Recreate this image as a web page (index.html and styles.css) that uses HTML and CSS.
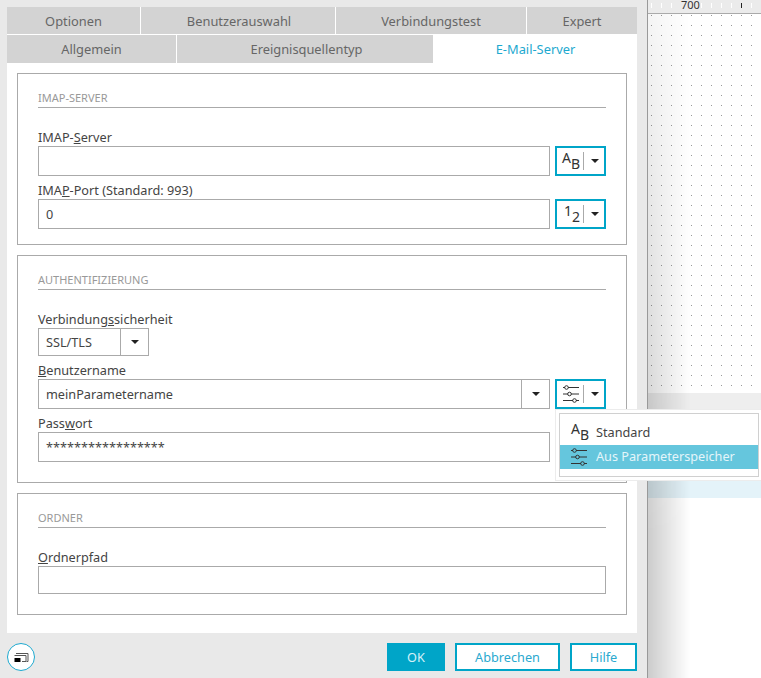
FILE: index.html
```html
<!DOCTYPE html>
<html lang="de">
<head>
  <meta charset="UTF-8" />
  <meta name="viewport" content="width=device-width, initial-scale=1.0"/>
  <title>E-Mail-Server</title>
  <link rel="stylesheet" href="styles.css">
</head>
<body>

  <div class="dialog">
    <div class="panel">
      <div class="tabs tabs-top">
        <div class="tab t-optionen">Optionen</div>
        <div class="tab t-benutzer">Benutzerauswahl</div>
        <div class="tab t-test">Verbindungstest</div>
        <div class="tab t-expert">Expert</div>
      </div>
      <div class="tabs tabs-bottom">
        <div class="tab t-allgemein">Allgemein</div>
        <div class="tab t-quelle">Ereignisquellentyp</div>
        <div class="tab tab-active">E-Mail-Server</div>
      </div>

      <div class="content">
        <section class="group group-first">
          <h2 class="group-title">IMAP-SERVER</h2>
          <label class="label">IMAP-<u>S</u>erver</label>
          <div class="row">
            <div class="input"></div>
            <div class="mode"><span class="mode-icon"><span class="hi">A</span><span class="lo">B</span></span><i class="sep"></i><i class="caret"></i></div>
          </div>
          <label class="label">IMA<u>P</u>-Port (Standard: 993)</label>
          <div class="row">
            <div class="input">0</div>
            <div class="mode"><span class="mode-icon mode-icon-num"><span class="hi">1</span><span class="lo">2</span></span><i class="sep"></i><i class="caret"></i></div>
          </div>
        </section>

        <section class="group">
          <h2 class="group-title">AUTHENTIFIZIERUNG</h2>
          <label class="label">Verbindung<u>s</u>sicherheit</label>
          <div class="select">
            <span class="select-value">SSL/TLS</span>
            <span class="select-arrow"><i class="caret"></i></span>
          </div>
          <label class="label"><u>B</u>enutzername</label>
          <div class="row">
            <div class="input input-combo">
              <span class="select-value">meinParametername</span>
              <span class="select-arrow"><i class="caret"></i></span>
            </div>
            <div class="mode">
              <svg class="sliders" width="20" height="20" viewBox="0 0 20 20"><path d="M1 3.500h2M6 3.500h11M1 10h5M9 10h8M1 16.500h10M14 16.500h3" /><circle cx="4.500" cy="3.500" r="1.800" /><circle cx="7.500" cy="10" r="1.800" /><circle cx="12.500" cy="16.500" r="1.800" /></svg>
              <i class="sep"></i><i class="caret"></i>
            </div>
          </div>
          <label class="label">Pass<u>w</u>ort</label>
          <div class="row">
            <div class="input input-password">*****************</div>
            <div class="mode-spacer"></div>
          </div>
        </section>

        <section class="group">
          <h2 class="group-title">ORDNER</h2>
          <label class="label"><u>O</u>rdnerpfad</label>
          <div class="input input-low"></div>
        </section>
      </div>
    </div>

    <div class="footer">
      <div class="round-btn">
        <svg width="16" height="14" viewBox="0 0 16 14"><path class="line" d="M3 3.500H15V11.500H13.500M1.500 5.500H13V11.500H9" /><rect x="1.500" y="8" width="6" height="4" /></svg>
      </div>
      <div class="footer-right">
        <div class="btn btn-primary">OK</div>
        <div class="btn btn-cancel">Abbrechen</div>
        <div class="btn btn-help">Hilfe</div>
      </div>
    </div>
  </div>

  <div class="canvas">
    <div class="ruler"><span class="ruler-num">700</span></div>
    <div class="dots"></div>
    <div class="greybar"></div>
    <div class="band"></div>
    <div class="blank"></div>
  </div>

  <div class="menu">
    <div class="menu-inner">
      <div class="menu-item">
        <span class="mode-icon menu-icon"><span class="hi">A</span><span class="lo">B</span></span>
        Standard
      </div>
      <div class="menu-item menu-item-active">
        <svg class="sliders menu-svg" width="20" height="20" viewBox="0 0 20 20"><path d="M1 3.500h2M6 3.500h11M1 10h5M9 10h8M1 16.500h10M14 16.500h3" /><circle cx="4.500" cy="3.500" r="1.800" /><circle cx="7.500" cy="10" r="1.800" /><circle cx="12.500" cy="16.500" r="1.800" /></svg>
        Aus Parameterspeicher
      </div>
    </div>
  </div>

</body>
</html>
```

FILE: styles.css
```css
html, body {
  height: 100%;
}
body {
  margin: 0;
  display: flex;
  overflow: hidden;
  background-color: #ffffff;
  font-family: "Noto Sans", sans-serif;
  font-size: 12.700px;
  color: #444;
}
.dialog {
  width: 647px;
  flex: none;
  box-sizing: border-box;
  padding: 7px 10px 7px 7px;
  background-color: #e9e9e9;
  display: flex;
  flex-direction: column;
}
.panel {
  background-color: #fff;
}
.tabs {
  display: flex;
  gap: 1px;
  color: #666;
  font-size: 12.850px;
}
.tabs-top {
  height: 27px;
  margin-bottom: 1px;
}
.tabs-bottom {
  height: 28px;
}
.tab {
  display: flex;
  align-items: center;
  justify-content: center;
  background-color: #d3d3d3;
}
.t-optionen { width: 133px; }
.t-benutzer { width: 194px; box-sizing: border-box; padding-left: 2px; }
.t-test { width: 190px; }
.t-expert { flex: 1; }
.t-allgemein { width: 169px; }
.t-quelle { width: 256px; box-sizing: border-box; padding-left: 3px; }
.tab-active {
  flex: 1;
  margin-left: -1px;
  padding-left: 1px;
  background-color: #fff;
  color: #1da9cf;
}
.content {
  padding: 10px 10px 18px;
  display: flex;
  flex-direction: column;
  gap: 10px;
}
.group {
  border: 1px solid #aaa;
  padding: 0 20px 20px;
}
.group-first {
  padding-bottom: 15px;
}
.group-title {
  height: 34px;
  box-sizing: border-box;
  margin: 0 0 20px;
  padding-bottom: 2px;
  display: flex;
  align-items: flex-end;
  border-bottom: 1px solid #aaa;
  font-size: 11px;
  font-weight: normal;
  color: #999;
}
.label {
  display: block;
  height: 18px;
  line-height: 18px;
  margin-top: 5px;
}
.group-title + .label {
  margin-top: 0;
}
.row {
  display: flex;
  gap: 5px;
}
.input {
  flex: 1;
  height: 30px;
  box-sizing: border-box;
  border: 1px solid #aaa;
  padding-left: 7px;
  line-height: 28px;
  display: flex;
}
.input-low {
  height: 28px;
}
.input-combo {
  padding-left: 0;
}
.select {
  width: 111px;
  height: 28px;
  box-sizing: border-box;
  border: 1px solid #aaa;
  display: flex;
  line-height: 26px;
}
.select-value {
  flex: 1;
  padding-left: 7px;
}
.select-arrow {
  width: 27px;
  border-left: 1px solid #aaa;
  display: flex;
  align-items: center;
  justify-content: center;
}
.caret {
  width: 0;
  height: 0;
  border-left: 4px solid transparent;
  border-right: 4px solid transparent;
  border-top: 4px solid #222;
}
.mode {
  width: 51px;
  height: 30px;
  flex: none;
  box-sizing: border-box;
  border: 2px solid #00a5c8;
  display: flex;
  align-items: center;
  padding-left: 5px;
}
.mode-spacer {
  width: 51px;
  flex: none;
}
.mode-icon {
  width: 20px;
  height: 20px;
  flex: none;
  display: flex;
  color: #333;
  font-size: 14px;
  line-height: 20px;
}
.mode-icon-num {
  padding-left: 2px;
  box-sizing: border-box;
}
.hi {
  margin-top: -3px;
}
.lo {
  margin-top: 3px;
}
.sep {
  width: 1px;
  height: 18px;
  margin: 0 7px 0 1px;
  background-color: #aaa;
}
.sliders {
  flex: none;
}
.sliders path,
.sliders circle {
  fill: none;
  stroke: #333;
  stroke-width: 1;
}
.footer {
  margin-top: 10px;
  height: 28px;
  display: flex;
  justify-content: space-between;
}
.footer-right {
  display: flex;
  gap: 10px;
}
.round-btn {
  width: 28px;
  height: 28px;
  box-sizing: border-box;
  border: 1px solid #1da9cf;
  border-radius: 50%;
  background-color: #fff;
  display: flex;
  align-items: center;
  justify-content: center;
}
.round-btn .line {
  fill: none;
  stroke: #555;
  stroke-width: 1;
}
.btn {
  height: 28px;
  box-sizing: border-box;
  border: 2px solid #00a5c8;
  background-color: #fff;
  color: #2aa9cf;
  display: flex;
  align-items: center;
  justify-content: center;
}
.btn-primary {
  width: 58px;
  background-color: #00a5c8;
  color: #d5f1f8;
}
.btn-cancel {
  width: 105px;
}
.btn-help {
  width: 67px;
}
.canvas {
  flex: 1;
  display: flex;
  flex-direction: column;
  position: relative;
  border-left: 1px solid #999;
}
.canvas::after {
  content: "";
  position: absolute;
  left: 0;
  top: 14px;
  bottom: 0;
  width: 42px;
  background: linear-gradient(to right, rgba(0, 0, 0, 0.2), rgba(0, 0, 0, 0));
  -webkit-mask-image: linear-gradient(to bottom, rgba(0, 0, 0, 0.2), #000 520px);
  mask-image: linear-gradient(to bottom, rgba(0, 0, 0, 0.2), #000 520px);
}
.ruler {
  height: 14px;
  box-sizing: border-box;
  flex: none;
  border-bottom: 1px solid #aaa;
  background-color: #ebebeb;
  background-image:
    linear-gradient(#222, #222),
    repeating-linear-gradient(to right, transparent 0, transparent 3px, #fff 3px, #fff 4px, transparent 4px, transparent 10px);
  background-size: 1px 5px, 100% 5px;
  background-position: 93px 3px, 0 3px;
  background-repeat: no-repeat;
  font-size: 11px;
  line-height: 10px;
  color: #333;
}
.ruler-num {
  display: inline-block;
  margin-left: 32px;
  padding: 0 1px;
  background-color: #ebebeb;
}
.dots {
  flex: 1;
  background-image: radial-gradient(circle at 0.5px 0.5px, #999 0.5px, transparent 0.7px);
  background-size: 10px 10px;
  background-position: 3px 1px;
}
.greybar {
  height: 88px;
  flex: none;
  background-color: #eeeeee;
}
.band {
  height: 17px;
  flex: none;
  background-color: #e4f3f9;
}
.blank {
  height: 180px;
  flex: none;
}
.menu {
  position: absolute;
  left: 555px;
  top: 409px;
  width: 206px;
  height: 72px;
  box-sizing: border-box;
  padding: 3px 2px 3px 3px;
  background-color: #fff;
  border: 1px solid #ececec;
  border-right: 0;
  z-index: 2;
}
.menu-inner {
  height: 100%;
  box-sizing: border-box;
  border: 1px solid #d0d0d0;
  padding-top: 7px;
}
.menu-item {
  height: 24px;
  box-sizing: border-box;
  padding: 0 0 2px 11px;
  display: flex;
  align-items: center;
  color: #444;
}
.menu-icon {
  margin-right: 5px;
}
.menu-svg {
  margin: 2px 6px 0 -1px;
}
.menu-item-active {
  background-color: #65c6dd;
  color: #e4f5fa;
}
```
